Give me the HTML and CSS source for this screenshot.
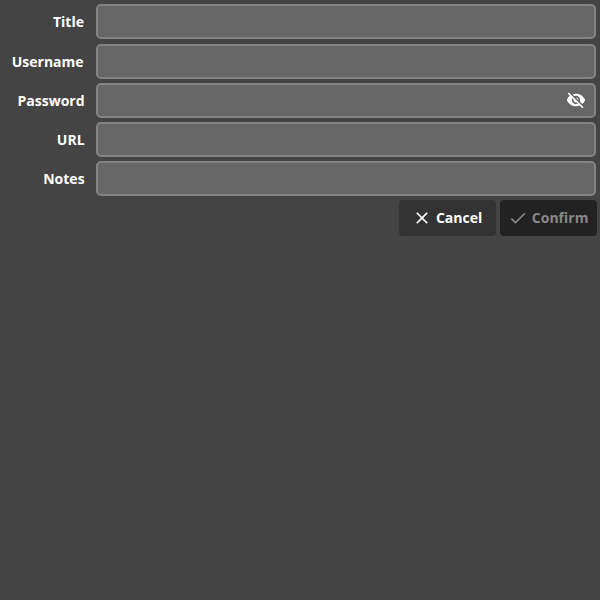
FILE: index.html
```html
<!DOCTYPE html>
<html lang="en">
<head>
<meta charset="utf-8">
<title>Entry</title>
<link rel="stylesheet" href="styles.css">
</head>
<body>
<form class="entry">
  <div class="row"><label class="label" for="title">Title</label><div class="field"><input class="input" id="title" type="text"></div></div>
  <div class="row"><label class="label label-wide" for="username">Username</label><div class="field"><input class="input" id="username" type="text"></div></div>
  <div class="row"><label class="label label-snug" for="password">Password</label><div class="field"><input class="input" id="password" type="password"><svg class="eye" viewBox="0 0 24 24"><path d="M12 7c2.76 0 5 2.24 5 5 0 .65-.13 1.26-.36 1.83l2.92 2.92c1.51-1.26 2.7-2.89 3.43-4.75-1.73-4.39-6-7.5-11-7.5-1.4 0-2.74.25-3.98.7l2.16 2.16C10.74 7.13 11.35 7 12 7zM2 4.27l2.28 2.28.46.46C3.08 8.3 1.78 10.02 1 12c1.73 4.39 6 7.5 11 7.5 1.55 0 3.03-.3 4.38-.84l.42.42L19.73 22 21 20.73 3.27 3 2 4.27zM7.53 9.8l1.55 1.55c-.05.21-.08.43-.08.65 0 1.66 1.34 3 3 3 .22 0 .44-.03.65-.08l1.55 1.55c-.67.33-1.41.53-2.2.53-2.76 0-5-2.24-5-5 0-.79.2-1.53.53-2.2zm4.31-.78l3.15 3.15.02-.16c0-1.66-1.34-3-3-3l-.17.01z"/></svg></div></div>
  <div class="row"><label class="label label-snug" for="url">URL</label><div class="field"><input class="input" id="url" type="text"></div></div>
  <div class="row"><label class="label label-snug" for="notes">Notes</label><div class="field"><input class="input" id="notes" type="text"></div></div>
  <div class="actions">
    <button class="button" type="button"><svg class="icon" viewBox="0 0 24 24"><path d="M19 6.41L17.59 5 12 10.59 6.41 5 5 6.41 10.59 12 5 17.59 6.41 19 12 13.41 17.59 19 19 17.59 13.41 12z"/></svg>Cancel</button>
    <button class="button confirm" type="button" disabled><svg class="icon" viewBox="0 0 24 24"><path d="M9 16.17L4.83 12l-1.42 1.41L9 19 21 7l-1.41-1.41z"/></svg>Confirm</button>
  </div>
</form>
</body>
</html>
```

FILE: styles.css
```css
* { box-sizing: border-box; }
body {
  margin: 0;
  background: #444;
  color: #fff;
  font: bold 14px/20px "Open Sans", "Noto Sans", sans-serif;
}
.entry { padding: 4px 4px 0 0; }
.row {
  display: grid;
  grid-template-columns: 84px 1fr;
  column-gap: 12px;
  align-items: center;
  height: 35px;
  margin-bottom: 4px;
}
.row:first-child { margin-bottom: 5px; }
.label { text-align: right; }
.label-wide { padding-right: .4px; }
.label-snug { margin-right: -.6px; }
.field { position: relative; height: 35px; }
.input {
  display: block;
  width: 100%;
  height: 100%;
  padding: 0 8px;
  border: 2px solid #848484;
  border-radius: 5px;
  background: #666;
  color: #fff;
  font: inherit;
  outline: 0;
}
.eye {
  position: absolute;
  right: 10px;
  top: 7px;
  width: 20px;
  height: 20px;
  fill: #fff;
}
.actions {
  display: flex;
  justify-content: flex-end;
  gap: 4px;
  margin-right: -1px;
}
.button {
  display: flex;
  align-items: center;
  justify-content: center;
  gap: 4px;
  width: 97px;
  height: 36px;
  padding: 0 .8px 0 0;
  border: 0;
  border-radius: 4px;
  background: #333;
  color: #fff;
  font: inherit;
}
.confirm { background: #222; color: #888; }
.icon { width: 20px; height: 20px; fill: currentColor; }
```
